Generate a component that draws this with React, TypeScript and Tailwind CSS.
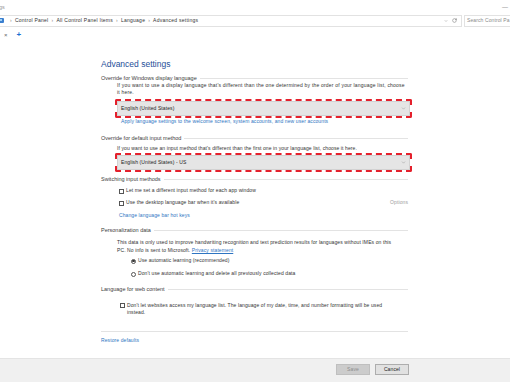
import { ChevronDown, RotateCw } from 'lucide-react'

const Section = ({ title }: { title: string }) => (
  <div className="flex items-center h-[8px] gap-[3px]">
    <span className="text-[5.5px] leading-[8px] text-[#3c3c3c] whitespace-nowrap">{title}</span>
    <div className="flex-1 h-px bg-[#e3e3e3]" />
  </div>
)

const Box = () => <div className="w-[5px] h-[5px] border-[0.5px] border-[#555] bg-white shrink-0" />

const Dropdown = ({ label }: { label: string }) => (
  <div className="ml-[14px] mr-[-4px] h-[19px] border-2 border-dashed border-[#e4202c] rounded-[2px]">
    <div className="h-full bg-[#e5e5e5] border border-[#d2d2d2] flex items-center justify-between px-[3px]">
      <span className="text-[5px] tracking-[0.1px] text-[#222]">{label}</span>
      <ChevronDown className="w-[5px] h-[5px] text-[#888]" strokeWidth={2} />
    </div>
  </div>
)

export default function App() {
  return (
    <div className="h-[382px] w-[510px] bg-white flex flex-col font-['Liberation_Sans',sans-serif] overflow-hidden">
      {/* title bar */}
      <div className="h-[14px] flex items-center justify-between">
        <span className="text-[5.5px] text-[#999] -ml-px">gs</span>
        <span className="text-[6px] text-[#777] mr-[2px]">—</span>
      </div>

      {/* address bar */}
      <div className="h-[13px] flex items-center gap-[2px]">
        <div className="flex-1 h-[12px] border-y border-r border-[#e2e2e2] flex items-center">
          <svg width="5" height="5" viewBox="0 0 5 5" className="-ml-[1px] shrink-0">
            <rect x="0" y="0" width="5" height="5" rx="1" fill="#3b7fcf" />
            <rect x="1" y="1" width="2" height="2" fill="#9fd0f5" />
          </svg>
          <div className="flex items-center text-[5px] tracking-[0.25px] text-[#333] gap-[3px] ml-[6px] whitespace-nowrap">
            <span className="text-[#888]">›</span>
            <span>Control Panel</span>
            <span className="text-[#888]">›</span>
            <span>All Control Panel Items</span>
            <span className="text-[#888]">›</span>
            <span>Language</span>
            <span className="text-[#888]">›</span>
            <span>Advanced settings</span>
          </div>
          <div className="flex-1" />
          <ChevronDown className="w-[4px] h-[4px] text-[#666] mr-[4px]" strokeWidth={2} />
          <RotateCw className="w-[5px] h-[5px] text-[#555] mr-[4px]" strokeWidth={2} />
        </div>
        <div className="w-[46px] h-[12px] border-y border-l border-[#e2e2e2] flex items-center pl-[2px] overflow-hidden">
          <span className="text-[5px] tracking-[0.1px] text-[#8a8a8a] whitespace-nowrap">Search Control Pa</span>
        </div>
      </div>

      {/* tabs row */}
      <div className="h-[16px] flex items-center">
        <span className="text-[6px] text-[#666] ml-[4px]">×</span>
        <span className="text-[8px] font-bold text-[#1d6fd1] ml-[9px] leading-none">+</span>
      </div>

      {/* content */}
      <div className="flex-1 flex flex-col ml-[101px] w-[307px] text-[#333] text-[5px] tracking-[0.1px]">
        <div className="mt-[16px] h-[10px] flex items-center">
          <span className="text-[8.5px] tracking-normal text-[#1f4f99]">Advanced settings</span>
        </div>

        <div className="mt-[5px] tracking-normal">
          <Section title="Override for Windows display language" />
        </div>
        <p className="pl-[16px] leading-[7px] tracking-[0.2px]">
          If you want to use a display language that's different than the one determined by the order of your language list, choose it here.
        </p>
        <div className="mt-[3px]">
          <Dropdown label="English (United States)" />
        </div>
        <div className="h-[8px] flex items-center pl-[20px]">
          <span className="text-[#2e75c2]">Apply language settings to the welcome screen, system accounts, and new user accounts</span>
        </div>

        <div className="mt-[8px] tracking-normal">
          <Section title="Override for default input method" />
        </div>
        <p className="mt-[3px] pl-[16px] leading-[7px]">
          If you want to use an input method that's different than the first one in your language list, choose it here.
        </p>
        <div className="mt-[1px]">
          <Dropdown label="English (United States) - US" />
        </div>

        <div className="mt-[3px] tracking-normal">
          <Section title="Switching input methods" />
        </div>
        <div className="mt-[4px] h-[8px] flex items-center pl-[18px] gap-[2px]">
          <Box />
          <span>Let me set a different input method for each app window</span>
        </div>
        <div className="mt-[4px] h-[8px] flex items-center pl-[18px] gap-[2px]">
          <Box />
          <span>Use the desktop language bar when it's available</span>
          <span className="ml-auto text-[#a0a0a0]">Options</span>
        </div>
        <div className="mt-[5px] h-[8px] flex items-center pl-[18px]">
          <span className="text-[#2e75c2]">Change language bar hot keys</span>
        </div>

        <div className="mt-[6px] tracking-normal">
          <Section title="Personalization data" />
        </div>
        <p className="mt-[4px] pl-[16px] pr-[8px] leading-[8px]">
          This data is only used to improve handwriting recognition and text prediction results for languages without IMEs on this PC. No info is sent to Microsoft.{' '}
          <span className="text-[#2e75c2] underline">Privacy statement</span>
        </p>
        <div className="mt-[3px] h-[8px] flex items-center pl-[30px] gap-[2px]">
          <div className="w-[5px] h-[5px] rounded-full border-[0.5px] border-[#555] flex items-center justify-center">
            <div className="w-[2.5px] h-[2.5px] rounded-full bg-[#333]" />
          </div>
          <span>Use automatic learning (recommended)</span>
        </div>
        <div className="mt-[5px] h-[8px] flex items-center pl-[30px] gap-[2px]">
          <div className="w-[5px] h-[5px] rounded-full border-[0.5px] border-[#555]" />
          <span>Don't use automatic learning and delete all previously collected data</span>
        </div>

        <div className="mt-[7px] tracking-normal">
          <Section title="Language for web content" />
        </div>
        <div className="mt-[9px] flex items-start pl-[19px] pr-[12px] gap-[2px]">
          <div className="mt-[1px]">
            <Box />
          </div>
          <p className="leading-[7px]">
            Don't let websites access my language list. The language of my date, time, and number formatting will be used instead.
          </p>
        </div>

        <div className="mt-[15px] h-px bg-[#e3e3e3]" />
        <div className="mt-[5px] h-[8px] flex items-center">
          <span className="text-[#2e75c2]">Restore defaults</span>
        </div>
      </div>

      {/* footer */}
      <div className="h-[24px] bg-[#f0f0f0] border-t border-[#e4e4e4] flex justify-end items-start pt-[5px] pr-[101px] gap-[5px] text-[5px] tracking-[0.1px]">
        <div className="w-[34px] h-[11px] bg-[#cccccc] border border-[#bfbfbf] flex items-center justify-center">
          <span className="text-[#8c8c8c]">Save</span>
        </div>
        <div className="w-[34px] h-[11px] bg-[#e1e1e1] border border-[#adadad] flex items-center justify-center">
          <span className="text-[#222]">Cancel</span>
        </div>
      </div>
    </div>
  )
}
